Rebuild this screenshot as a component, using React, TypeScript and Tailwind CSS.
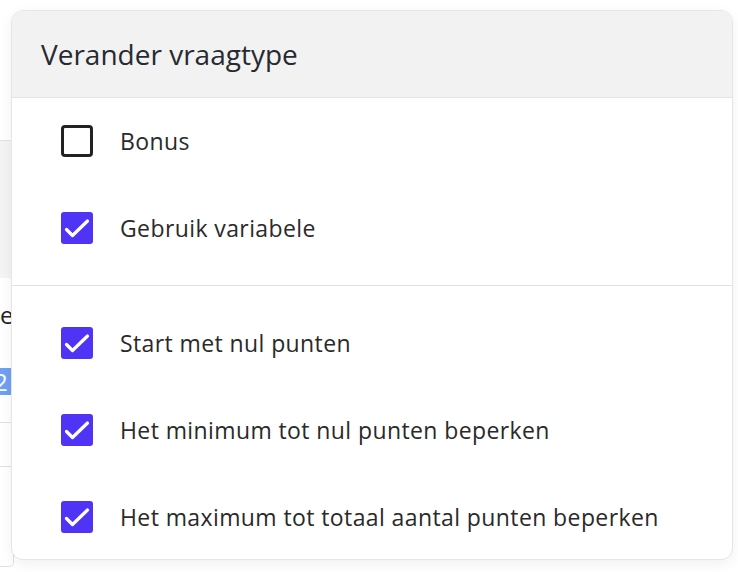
import React from 'react';

const Check = ({ checked }: { checked: boolean }) =>
  checked ? (
    <span className="flex h-8 w-8 shrink-0 items-center justify-center rounded-[3px] bg-[#5034f5]">
      <svg width="32" height="32" viewBox="0 0 32 32" fill="none">
        <path d="M5.5 17.5 L11.5 23.5 L26.5 9" stroke="white" strokeWidth="3.2" strokeLinecap="round" strokeLinejoin="round" />
      </svg>
    </span>
  ) : (
    <span className="block h-8 w-8 shrink-0 rounded-[4px] border-[3px] border-[#222222] bg-white" />
  );

const Row = ({ label, checked }: { label: string; checked: boolean }) => (
  <label className="flex h-8 items-center gap-[27px] pl-[49px]">
    <Check checked={checked} />
    <span className="text-[23px] leading-none tracking-[0.4px] text-[#2a2a2a]">{label}</span>
  </label>
);

const App = () => {
  return (
    <main className="relative h-[572px] w-[738px] overflow-hidden bg-white" style={{ fontFamily: '"Open Sans", "Noto Sans", sans-serif' }}>
      {/* page behind the menu */}
      <div className="flex w-[14px] flex-col overflow-hidden">
        <div className="h-[140px] bg-white" />
        <div className="h-[138px] border-t border-[#e3e3e3] bg-[#f4f4f4]" />
        <div className="flex h-[144px] flex-col bg-white">
          <span className="mt-[22px] text-[24px] leading-[30px] text-[#222]">e</span>
          <span className="mt-[38px] -ml-[6px] w-[20px] bg-[#6ea0f5] text-[24px] leading-[27px] text-white">2</span>
        </div>
        <div className="h-[44px] border-t border-[#e3e3e3]" />
        <div className="h-[101px] rounded-br-[5px] border-t border-r border-b border-[#e0e0e0]" />
      </div>

      {/* dropdown */}
      <div className="absolute top-[10px] left-[11px] flex h-[550px] w-[722px] flex-col overflow-hidden rounded-[12px] border border-[#e6e6e6] bg-white shadow-[0_4px_14px_rgba(0,0,0,0.06)]">
        <div className="flex h-[87px] shrink-0 items-center border-b border-[#e4e4e4] bg-[#f2f2f2] px-[29px]">
          <h2 className="text-[28px] leading-none text-[#272a30]">Verander vraagtype</h2>
        </div>
        <div className="flex flex-col gap-[55px] border-b border-[#e2e2e2] pt-[27px] pb-[41px]">
          <Row label="Bonus" checked={false} />
          <Row label="Gebruik variabele" checked />
        </div>
        <div className="flex flex-col gap-[55px] pt-[41px]">
          <Row label="Start met nul punten" checked />
          <Row label="Het minimum tot nul punten beperken" checked />
          <Row label="Het maximum tot totaal aantal punten beperken" checked />
        </div>
      </div>
    </main>
  );
};

export default App;
